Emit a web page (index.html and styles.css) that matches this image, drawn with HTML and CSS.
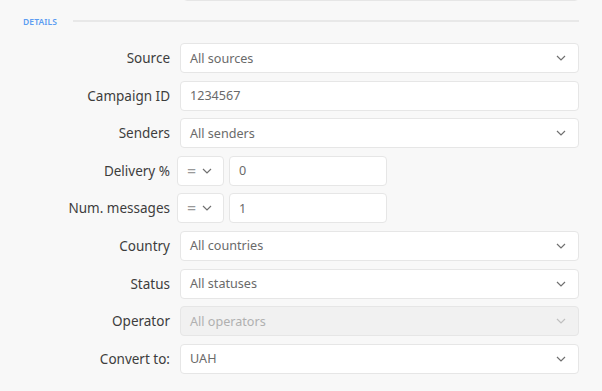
FILE: index.html
```html
<!DOCTYPE html>
<html lang="en">
<head>
    <meta charset="UTF-8">
    <meta name="viewport" content="width=device-width, initial-scale=1.0">
    <title>Filters</title>
    <link rel="stylesheet" href="styles.css">
</head>
<body>
    <div class="panel">
        <div class="prev-field"></div>

        <div class="section-head">
            <span class="section-title">DETAILS</span>
            <span class="section-line"></span>
        </div>

        <div class="form-grid">
            <label class="field-label">Source</label>
            <div class="select-box"><span>All sources</span><svg class="chev" viewBox="0 0 10 6"><path d="M1 1l4 4 4-4"/></svg></div>

            <label class="field-label">Campaign ID</label>
            <div class="text-box">1234567</div>

            <label class="field-label">Senders</label>
            <div class="select-box"><span>All senders</span><svg class="chev" viewBox="0 0 10 6"><path d="M1 1l4 4 4-4"/></svg></div>

            <label class="field-label">Delivery %</label>
            <div class="compare-row">
                <div class="op-box"><span class="op-sign">=</span><svg class="chev" viewBox="0 0 10 6"><path d="M1 1l4 4 4-4"/></svg></div>
                <div class="text-box num-box">0</div>
            </div>

            <label class="field-label">Num. messages</label>
            <div class="compare-row">
                <div class="op-box"><span class="op-sign">=</span><svg class="chev" viewBox="0 0 10 6"><path d="M1 1l4 4 4-4"/></svg></div>
                <div class="text-box num-box">1</div>
            </div>

            <label class="field-label">Country</label>
            <div class="select-box"><span>All countries</span><svg class="chev" viewBox="0 0 10 6"><path d="M1 1l4 4 4-4"/></svg></div>

            <label class="field-label">Status</label>
            <div class="select-box"><span>All statuses</span><svg class="chev" viewBox="0 0 10 6"><path d="M1 1l4 4 4-4"/></svg></div>

            <label class="field-label">Operator</label>
            <div class="select-box disabled"><span>All operators</span><svg class="chev" viewBox="0 0 10 6"><path d="M1 1l4 4 4-4"/></svg></div>

            <label class="field-label">Convert to:</label>
            <div class="select-box"><span>UAH</span><svg class="chev" viewBox="0 0 10 6"><path d="M1 1l4 4 4-4"/></svg></div>
        </div>
    </div>
</body>
</html>
```

FILE: styles.css
```css
body {
    margin: 0;
    background-color: #f8f8f8;
    font-family: "Noto Sans", Arial, sans-serif;
    color: #333;
}
.panel {
    width: 602px;
    height: 391px;
    overflow: hidden;
    box-sizing: border-box;
    padding-right: 23px;
}
.prev-field {
    margin: -29px 0 0 183px;
    height: 28px;
    background-color: #fff;
    border: 1px solid #e6e6e6;
    border-radius: 4px;
}
.section-head {
    display: flex;
    align-items: center;
    padding-left: 23px;
    margin-top: 11px;
    height: 18px;
}
.section-title {
    font-size: 8.5px;
    font-weight: 600;
    color: #5c9df2;
    letter-spacing: 0.1px;
}
.section-line {
    flex: 1;
    height: 2px;
    margin-left: 16px;
    background-color: #e8e8e8;
}
.form-grid {
    display: grid;
    grid-template-columns: 170px 1fr;
    column-gap: 10px;
    row-gap: 7.6px;
    margin-top: 13px;
}
.field-label {
    font-size: 13.5px;
    text-align: right;
    line-height: 30px;
    color: #3d3d3d;
}
.select-box, .text-box, .op-box {
    height: 30px;
    box-sizing: border-box;
    background-color: #fff;
    border: 1px solid #e6e6e6;
    border-radius: 4px;
    display: flex;
    align-items: center;
    padding: 0 12px 0 9px;
    font-size: 12.6px;
    color: #6a6a6a;
}
.select-box {
    justify-content: space-between;
}
.select-box.disabled {
    background-color: #f1f1f1;
    color: #b0b0b0;
}
.select-box.disabled .chev {
    stroke: #c0c0c0;
}
.chev {
    width: 10px;
    height: 6px;
    fill: none;
    stroke: #707070;
    stroke-width: 1.2;
}
.compare-row {
    display: flex;
    gap: 5px;
    margin-left: -3px;
}
.op-box {
    width: 47px;
    padding: 0 11px 0 9px;
    justify-content: space-between;
    color: #999;
}
.op-sign {
    font-size: 16px;
    line-height: 1;
}
.num-box {
    width: 158px;
}
```
